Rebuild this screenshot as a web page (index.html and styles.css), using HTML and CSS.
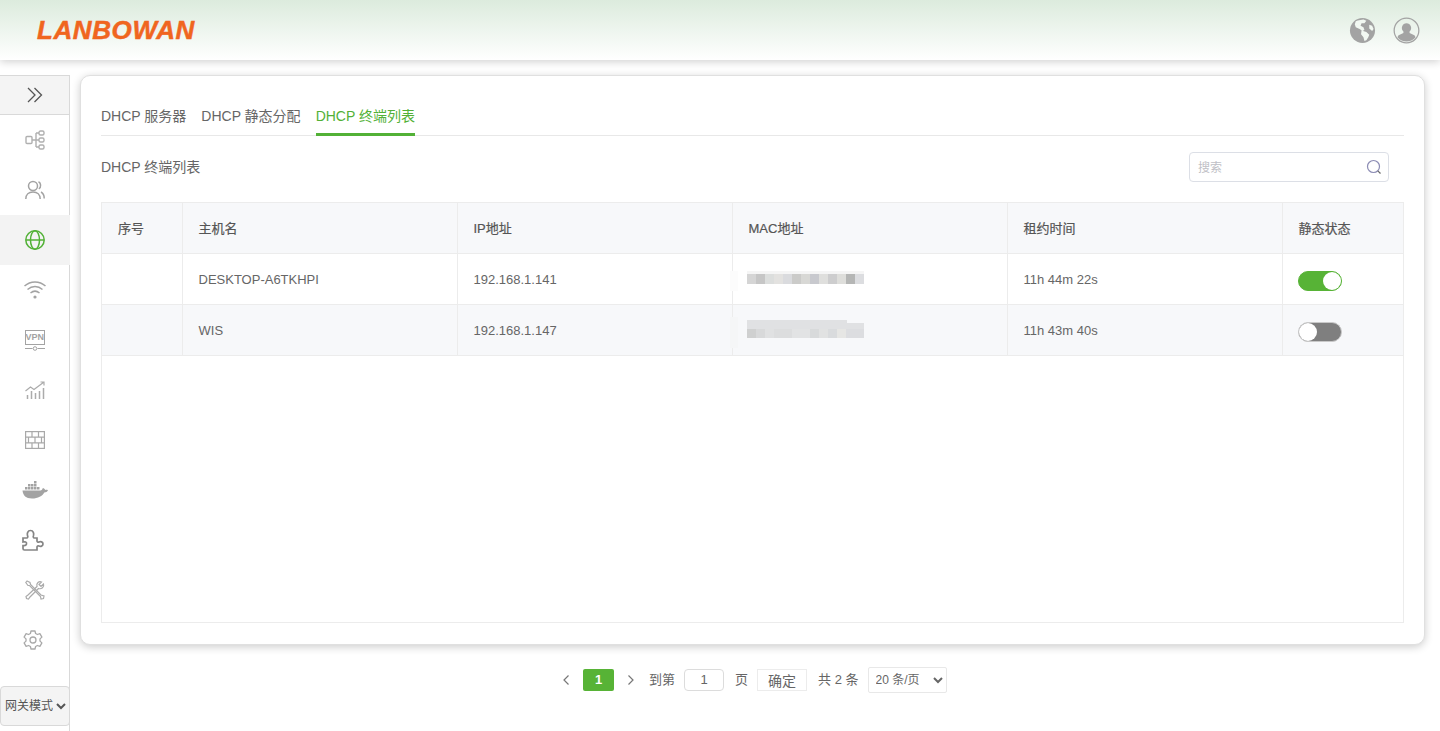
FILE: index.html
```html
<!DOCTYPE html>
<html lang="zh">
<head>
<meta charset="utf-8">
<title>LANBOWAN</title>
<link rel="stylesheet" href="styles.css">
</head>
<body>
<header class="topbar">
  <div class="logo">LANBOWAN</div>
  <div class="top-icons">
    <svg class="top-icon" viewBox="0 0 28 28"><circle cx="14" cy="14" r="13" fill="#a3a3a3"/><path d="M9 3.500l6-1 3 1.500-2 2.500-3 0-1 2.500 3 1.500 1 3-2 1-3-2-4-2-1-3 1-3zM13 14l5 1.500 3 3-1 2.500-2 3-2 1-1-4-2.500-3zM21 8l3 1 1.500 3.500-1.500 2-3-2.500z" fill="#f2f8f2"/></svg>
    <svg class="top-icon" viewBox="0 0 28 28"><circle cx="14" cy="14" r="12.800" fill="none" stroke="#a3a3a3" stroke-width="1.300"/><path d="M14 6.500a4.900 4.900 0 0 1 3.200 8.500v1.500l5 2.300a3 3 0 0 1 1 2.400 12 12 0 0 1-18.400 0 3 3 0 0 1 1-2.400l5-2.300V15A4.900 4.900 0 0 1 14 6.500z" fill="#a3a3a3"/></svg>
  </div>
</header>
<div class="shell">
  <nav class="sidebar">
    <div class="collapse">
      <svg class="ic-collapse" viewBox="0 0 16 16"><path d="M1 1l7 7-7 7M7.500 1l7 7-7 7" fill="none" stroke="#555" stroke-width="1.300"/></svg>
    </div>
    <div class="nav-item">
      <svg class="ic" viewBox="0 0 20 20" fill="none" stroke="#b0b0b0" stroke-width="1.400"><rect x="1" y="6.500" width="6" height="7" rx="1"/><rect x="14" y="1" width="5" height="4" rx="1.500"/><rect x="14" y="8" width="5" height="4" rx="1.500"/><rect x="14" y="15" width="5" height="4" rx="1.500"/><path d="M7 10h7M11 3v14M11 3h3M11 17h3"/></svg>
    </div>
    <div class="nav-item">
      <svg class="ic" viewBox="0 0 20 20" fill="none" stroke="#a3a3a3" stroke-width="1.500"><circle cx="8" cy="6" r="4.500"/><path d="M.8 19c0-4.500 3-7 7.200-7s7.200 2.500 7.200 7M13.500 1.800c2.500 1 3 5.500.3 7M16 12c2 1 3.200 3.500 3.200 6.500"/></svg>
    </div>
    <div class="nav-item active">
      <svg class="ic" viewBox="0 0 20 20" fill="none" stroke="#52b136" stroke-width="1.500"><circle cx="10" cy="10" r="9.200"/><ellipse cx="10" cy="10" rx="4.500" ry="9.200"/><path d="M1 10h18"/></svg>
    </div>
    <div class="nav-item">
      <svg class="ic-wifi" viewBox="0 0 22 18" fill="none" stroke="#a3a3a3" stroke-width="1.500"><path d="M.5 5c6-5.500 15-5.500 21 0M3.500 8.500c4.500-4 10.500-4 15 0M6.500 12c3-2.500 6-2.500 9 0"/><circle cx="11" cy="16" r="1.600" fill="#a3a3a3" stroke="none"/></svg>
    </div>
    <div class="nav-item">
      <div class="vpn">
        <span class="vpn-box">VPN</span>
        <svg class="vpn-line" viewBox="0 0 20 5" fill="none" stroke="#a3a3a3"><path d="M0 2.500h7.500M12.500 2.500h7.500"/><circle cx="10" cy="2.500" r="1.800"/></svg>
      </div>
    </div>
    <div class="nav-item">
      <svg class="ic" viewBox="0 0 20 20" fill="none" stroke="#ababab" stroke-width="1.200"><path d="M.5 11l5-4 3.500 2.500L19 2M15.500 2H19v3.500"/><path d="M2.500 19v-4M6.500 19v-8M10.500 19v-6M14.500 19v-8M18.500 19v-11" stroke-width="1.500"/></svg>
    </div>
    <div class="nav-item">
      <svg class="ic" viewBox="0 0 20 18" fill="none" stroke="#a9a9a9" stroke-width="1.200"><rect x=".6" y=".6" width="18.800" height="16.800"/><path d="M.6 6.200h18.800M.6 11.800h18.800M7 .6v5.600M13.500 .6v5.600M3.500 6.200v5.600M10 6.200v5.600M16.500 6.200v5.600M7 11.800v5.600M13.500 11.800v5.600"/></svg>
    </div>
    <div class="nav-item">
      <svg class="ic-wide" viewBox="0 0 26 18" fill="#a3a3a3"><path d="M.5 9.500h18c1 0 2-1 2.300-2.500 1.200.3 2 1 2.400 2 1-.3 2-.2 2.800.3-.8 1.500-2 2.200-3.700 2.200C20.500 15 16 17.500 10 17.500c-6 0-9-3-9.500-8z"/><path d="M3 6h2.500v2.500H3zM6 6h2.500v2.500H6zM9 6h2.500v2.500H9zM12 6h2.500v2.500H12zM6 3h2.500v2.500H6zM9 3h2.500v2.500H9zM12 3h2.500v2.500H12zM12 0h2.500v2.500H12zM15 6h2.500v2.500H15z"/></svg>
    </div>
    <div class="nav-item">
      <svg class="ic-puzzle" viewBox="0 0 22 22" fill="none" stroke="#858585" stroke-width="1.700"><path d="M1 9h3.500c1.500 0 1.500-1.500 1-2.500C5 5 5.500 1.500 8.500 1.500s3.500 3.500 3 5c-.4 1-.5 2.500 1 2.500H15v3c0 1 1 1.500 2 1 1.500-.8 4-.3 4 2s-2.500 2.800-4 2c-1-.5-2 0-2 1v3H2.500a1.500 1.500 0 0 1-1.500-1.500v-3c1 0 3 .5 3.500-1.500S3 12.500 1 13z"/></svg>
    </div>
    <div class="nav-item">
      <svg class="ic" viewBox="0 0 20 20" fill="none" stroke="#ababab" stroke-width="1.200"><path d="M2 1L.8 2.500 3 5.500l1.500 0 11 11 .5 2.500 2.500-.5.500-2.500-3-1-10.500-10.500-.5-2z"/><path d="M18.500 4l-2.500 2.500-2-2 2.500-2.500c-2.500-1-5.500 1-4.500 4.500L3 15l-2 1.500.5 2 2 .5 1.500-2 8.500-8.500c3 1 6-1.500 5-4.500z"/></svg>
    </div>
    <div class="nav-item nav-gear">
      <svg class="ic" viewBox="0 0 20 20" fill="none" stroke="#a9a9a9" stroke-width="1.300"><path d="M8 1h4l.6 2.500 1.800 1 2.500-.8 2 3.400-1.900 1.800v2.200l1.900 1.800-2 3.400-2.500-.8-1.800 1-.6 2.500H8l-.6-2.500-1.800-1-2.500.8-2-3.400 1.900-1.800V8.900L1.100 7.100l2-3.400 2.500.8 1.800-1z" stroke-linejoin="round"/><circle cx="10" cy="10" r="3"/></svg>
    </div>
    <div class="mode">
      <select class="mode-select"><option>网关模式</option></select>
    </div>
  </nav>
  <main class="content">
    <section class="card">
      <div class="tabs">
        <span class="tab">DHCP 服务器</span>
        <span class="tab">DHCP 静态分配</span>
        <span class="tab tab-on">DHCP 终端列表</span>
      </div>
      <div class="titlebar">
        <span class="title">DHCP 终端列表</span>
        <div class="search">
          <span class="search-ph">搜索</span>
          <svg class="search-ic" viewBox="0 0 16 16" fill="none" stroke="#8c8cb4" stroke-width="1.200"><circle cx="7.500" cy="7.500" r="6"/><path d="M11.800 11.800l2.700 2.700" stroke="#666"/></svg>
        </div>
      </div>
      <div class="table-box">
        <table class="grid">
          <colgroup><col class="c1"><col class="c2"><col class="c2"><col class="c2"><col class="c2"><col class="c6"></colgroup>
          <thead>
            <tr><th>序号</th><th>主机名</th><th>IP地址</th><th>MAC地址</th><th>租约时间</th><th>静态状态</th></tr>
          </thead>
          <tbody>
            <tr>
              <td></td><td>DESKTOP-A6TKHPI</td><td>192.168.1.141</td>
              <td class="mac-cell"><span class="mac mac-a"></span></td>
              <td>11h 44m 22s</td>
              <td><span class="switch on"><span class="knob"></span></span></td>
            </tr>
            <tr class="alt">
              <td></td><td>WIS</td><td>192.168.1.147</td>
              <td class="mac-cell"><span class="mac mac-b"></span></td>
              <td>11h 43m 40s</td>
              <td><span class="switch off"><span class="knob"></span></span></td>
            </tr>
          </tbody>
        </table>
      </div>
    </section>
    <div class="pager">
      <svg class="chev" viewBox="0 0 8 12"><path d="M6.500 1.500L2 6l4.500 4.500" fill="none" stroke="#777" stroke-width="1.200"/></svg>
      <span class="page-cur">1</span>
      <svg class="chev" viewBox="0 0 8 12"><path d="M1.500 1.500L6 6l-4.500 4.500" fill="none" stroke="#777" stroke-width="1.200"/></svg>
      <span class="pg-text">到第</span>
      <span class="page-input">1</span>
      <span class="pg-text">页</span>
      <span class="page-ok">确定</span>
      <span class="pg-text">共 2 条</span>
      <select class="page-size"><option>20 条/页</option></select>
    </div>
  </main>
</div>
</body>
</html>
```
FILE: styles.css
```css
* { box-sizing: border-box; }
html, body { margin: 0; height: 731px; overflow: hidden; background: #fff; }
body { font-family: "Liberation Sans", "Noto Sans CJK SC", sans-serif; color: #666; font-size: 13px; }

.topbar {
  height: 60px;
  padding: 0 20px 0 37px;
  display: flex;
  align-items: center;
  justify-content: space-between;
  background: linear-gradient(#dcebdd, #fff);
  box-shadow: 0 2px 8px rgba(0, 0, 0, .18);
  position: relative;
}
.logo {
  font-size: 26px;
  font-weight: 700;
  font-style: italic;
  letter-spacing: .6px;
  color: #f0651f;
  -webkit-text-stroke: .5px #f0651f;
}
.top-icons { display: flex; gap: 17px; }
.top-icon { width: 27px; height: 27px; display: block; }

.shell { display: flex; padding-top: 15px; height: 671px; }
.sidebar {
  width: 70px;
  flex: none;
  border-right: 1px solid #d9d9d9;
  display: flex;
  flex-direction: column;
}
.collapse {
  height: 40px;
  background: #f4f4f4;
  border: 1px solid #d9d9d9;
  border-left: 0;
  margin-right: -1px;
  display: flex;
  align-items: center;
  justify-content: center;
}
.ic-collapse { width: 16px; height: 16px; }
.nav-item {
  height: 50px;
  display: flex;
  align-items: center;
  justify-content: center;
}
.nav-item.active { background: #f3f3f3; margin-right: -1px; padding-right: 1px; }
.nav-gear { padding-right: 3px; }
.ic { width: 20px; height: 20px; display: block; }
.ic-wifi { width: 22px; height: 18px; display: block; }
.ic-puzzle { width: 22px; height: 22px; display: block; margin-right: 3px; }
.ic-wide { width: 26px; height: 18px; display: block; }
.vpn { width: 20px; display: flex; flex-direction: column; }
.vpn-box {
  height: 15px;
  border: 1px solid #a3a3a3;
  font: 700 9px/13px "Liberation Sans", sans-serif;
  color: #a3a3a3;
  text-align: center;
}
.vpn-line { width: 20px; height: 5px; display: block; margin-top: 1px; }
.mode { margin-top: auto; padding-bottom: 5px; }
.mode-select {
  width: 70px;
  height: 40px;
  font: 12px "Liberation Sans", "Noto Sans CJK SC", sans-serif;
  color: #555;
  background: #f4f4f4;
  border: 1px solid #d9d9d9;
  border-radius: 4px;
  padding: 0;
}

.content { width: 1370px; display: flex; flex-direction: column; }
.card {
  margin: 0 15px 0 10px;
  height: 570px;
  background: #fff;
  border: 1px solid #e0e0e0;
  border-radius: 10px;
  box-shadow: 0 2px 9px rgba(0, 0, 0, .2);
  padding: 20px;
  display: flex;
  flex-direction: column;
}
.tabs {
  display: flex;
  gap: 15px;
  height: 40px;
  border-bottom: 1px solid #e8e8e8;
}
.tab { font-size: 14px; line-height: 40px; height: 40px; color: #666; }
.tab-on { color: #52b136; border-bottom: 3px solid #52b136; }
.titlebar {
  height: 66px;
  display: flex;
  align-items: center;
  justify-content: space-between;
  padding-right: 15px;
  font-size: 14px;
}
.title { margin-top: -7px; }
.search {
  width: 200px;
  height: 30px;
  margin-top: -5px;
  border: 1px solid #dcdfe6;
  border-radius: 4px;
  display: flex;
  align-items: center;
  justify-content: space-between;
  padding: 0 6px 0 8px;
}
.search-ph { font-size: 12px; color: #bfbfc6; }
.search-ic { width: 16px; height: 16px; }
.table-box { height: 421px; border: 1px solid #ececec; border-top: 0; }
.grid { width: 100%; border-collapse: collapse; table-layout: fixed; }
.c1 { width: 80px; }
.c2 { width: 275px; }
.c6 { width: auto; }
.grid th, .grid td {
  height: 51px;
  padding: 0 15px 0 16px;
  text-align: left;
  font-size: 13px;
  font-weight: 400;
  color: #666;
  border: 1px solid #ececec;
}
.grid th { background: #f7f8fa; color: #555; -webkit-text-stroke: .2px #555; padding-bottom: 2px; }
.grid tr > :first-child { border-left: 0; }
.grid tr > :last-child { border-right: 0; }
.alt td { background: #f7f8fa; }
.mac-cell { position: relative; }
.mac { display: block; width: 117px; margin-left: -2px; }
.mac::before {
  content: "";
  position: absolute;
  left: -3px;
  width: 8px;
}
.mac-a {
  height: 13px;
  margin-bottom: 3px;
  background: linear-gradient(#f5f5f5 0 3px, transparent 3px),
    linear-gradient(90deg, #d5d5d5 0 9px, #c6c6c6 0 18px, #dcdedd 0 27px, #e3e2e0 0 36px, #dadbde 0 45px, #cbcbc9 0 54px, #d8d8d5 0 63px, #c8c9ce 0 72px, #dfdfdd 0 81px, #cdcdce 0 90px, #dededb 0 99px, #b5b6b5 0 108px, #dcdde0 0 117px);
}
.mac-a::before { top: 17px; height: 20px; background: #fcfcfc; }
.mac-b {
  height: 18px;
  margin-bottom: 2px;
  background: linear-gradient(90deg, transparent 100px, #f7f8fa 100px) 0 0 / 117px 3px no-repeat,
    linear-gradient(#e0e1e3 0 9px, transparent 9px),
    linear-gradient(90deg, #cfd0d0 0 9px, #d8d9da 0 18px, #e0e1e2 0 27px, #dcddde 0 45px, #e2e3e4 0 63px, #d8dadb 0 72px, #e1e2e2 0 81px, #d9dbdd 0 90px, #e6e6e4 0 99px, #dcdde0 0 117px);
}
.mac-b::before { top: 12px; height: 31px; background: #f5f6f7; }
.switch {
  display: block;
  position: relative;
  width: 44px;
  height: 20px;
  margin: 3px 0 0 -1px;
  border-radius: 10px;
}
.switch.on { background: #57b336; border: 1px solid #57b336; }
.switch.off { background: #7f7f7f; border: 1px solid #c9c9c9; }
.knob {
  position: absolute;
  top: 0;
  width: 18px;
  height: 18px;
  border-radius: 50%;
  background: #fff;
}
.on .knob { right: 0; }
.off .knob { left: 0; }

.pager {
  margin-top: 22px;
  height: 26px;
  margin-left: 492px;
  display: flex;
  align-items: center;
  font-size: 13px;
}
.chev { width: 8px; height: 12px; flex: none; }
.page-cur {
  width: 31px;
  height: 22px;
  margin: 0 13px;
  background: #57b336;
  border-radius: 2px;
  color: #fff;
  font-weight: 700;
  text-align: center;
  line-height: 22px;
}
.pg-text { white-space: nowrap; padding-bottom: 3px; }
.pager .chev + .pg-text { margin-left: 14px; }
.page-input {
  width: 40px;
  height: 22px;
  margin: 0 11px 0 9px;
  border: 1px solid #dcdcdc;
  border-radius: 4px;
  text-align: center;
  line-height: 20px;
}
.page-ok {
  width: 50px;
  height: 22px;
  margin: 0 11px 0 9px;
  border: 1px solid #ececec;
  text-align: center;
  line-height: 22px;
  font-size: 14px;
}
.page-size {
  width: 79px;
  height: 26px;
  margin-left: 9px;
  font: 12px "Liberation Sans", "Noto Sans CJK SC", sans-serif;
  color: #666;
  background: #fff;
  border: 1px solid #e8e8e8;
  border-radius: 2px;
  padding: 0 0 0 3px;
}
```
